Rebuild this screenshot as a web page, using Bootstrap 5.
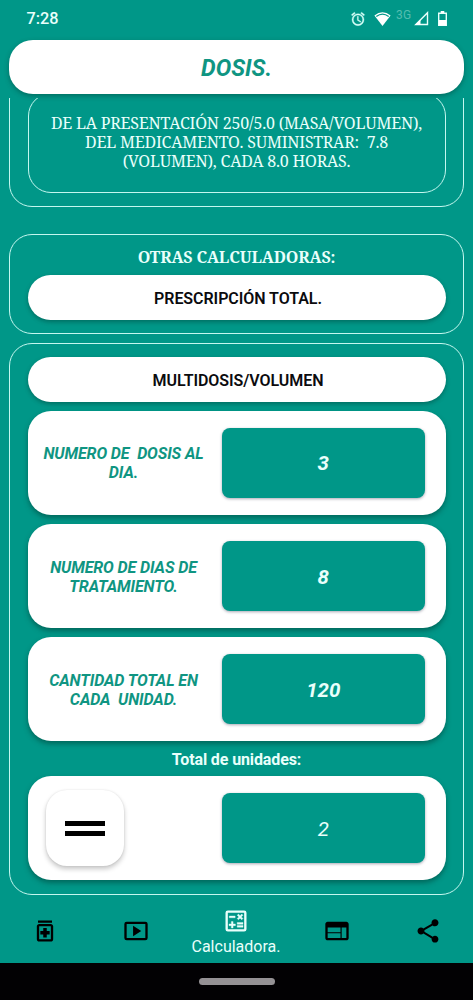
<!DOCTYPE html>
<html lang="es">
<head>
<meta charset="utf-8">
<meta name="viewport" content="width=device-width, initial-scale=1">
<title>Dosis</title>
<link rel="stylesheet" href="https://cdn.jsdelivr.net/npm/bootstrap@5.3.0/dist/css/bootstrap.min.css">
<style>
:root{--teal:#009788}
body{background:var(--teal);font-family:Roboto,"Liberation Sans",sans-serif;font-size:16px;line-height:19px;color:#e9fffb}
.screen{height:1000px;overflow:hidden}
.status{height:40px;padding:0 26.5px 3px 26.5px;font-size:16.3px;font-weight:500}
.network{font-size:12px;font-weight:400;color:#54bdb0;margin:-6px 2px 0 5px;letter-spacing:.3px}
.title-card{height:54px;margin:0 9px;padding-top:3px;border-radius:24px;background:#fff;color:#0f9582;font-size:23.2px;box-shadow:0 2px 5px rgba(0,60,50,.45)}
.scroller{margin-top:4px;padding:0 9px;height:797px}
.outline{border:1px solid #c4f7ef;border-radius:23px;padding:0 17.5px}
.serif{font-family:"Noto Serif","DejaVu Serif Condensed","DejaVu Serif",serif;letter-spacing:-.21px}
.result-out{height:131px;margin-top:-22px;padding-top:15.500px}
.result-in{height:100.500px;padding-top:20px;border-radius:23px}
.calc-heading{padding-top:13px;height:39.5px;line-height:19px;letter-spacing:-.15px}
.calc-total{margin-top:27px;height:100px}
.calc-multi{margin-top:8.500px;height:552px;padding-top:13px}
.pill{height:45.6px;padding-top:2px;padding-left:3px;border-radius:23px;background:#fff;color:#0b0b0e;font-weight:600;letter-spacing:-.05px;box-shadow:0 2px 4px rgba(0,60,50,.45)}
.panel{height:104.4px;margin-top:8.700px;border-radius:23px;background:#fff;box-shadow:0 3px 5px rgba(0,60,50,.5);padding-right:21px}
.caption{width:194.5px;color:#0f9582;padding:1px 2.500px 0 0;letter-spacing:-.1px}
.total-label{height:34.500px;padding-top:2px;letter-spacing:-.12px}
.field{width:202.5px;height:70px;padding:2px 0 0 0;border-radius:8px;background:var(--teal);font-size:20.5px;box-shadow:0 1px 3px rgba(40,40,70,.4)}
.equal{width:78px;height:76px;margin-left:18px;border-radius:21px;background:#fff;box-shadow:0 3px 5px rgba(0,0,0,.22),0 0 2px rgba(0,0,0,.1)}
.bottom{height:67.5px;padding-top:4px}
.tab{width:90.500px}
.tab-active{width:111px;padding-right:1px}
.gesture{height:37.5px;background:#020103}
.gesture span{width:76px;height:7px;background:#949194}
.ls{white-space:pre}
</style>
</head>
<body>
<main class="screen d-flex flex-column">
  <header class="status d-flex align-items-center justify-content-between flex-shrink-0">
    <span>7:28</span>
    <span class="d-flex align-items-center">
      <svg width="16" height="16" viewBox="0 0 24 24" fill="#d9fff8"><path d="M22 5.7l-4.600-3.900-1.300 1.500 4.600 3.900zM7.900 3.400L6.600 1.900 2 5.700l1.300 1.500zM12.500 8H11v6l4.700 2.900.8-1.200-4-2.400zM12 4a9 9 0 1 0 0 18 9 9 0 0 0 0-18zm0 16a7 7 0 1 1 0-14 7 7 0 0 1 0 14z" stroke="#d9fff8" stroke-width=".5"/></svg>
      <svg class="ms-2" width="17" height="16" viewBox="0 0 17 16"><path d="M.4 4.500Q8.500-2.200 16.600 4.500L8.500 15z" fill="#fff"/><path d="M2.300 5.500Q8.500.6 14.700 5.500" fill="none" stroke="#009788" stroke-width="1.200"/></svg>
      <span class="network">3G</span>
      <svg width="15" height="15" viewBox="0 0 15 15"><path d="M1.800 13.500H13.500V1.800z" fill="none" stroke="#e9fffb" stroke-width="1.400"/><path d="M1 14h5.500V8.500z" fill="#fff"/></svg>
      <svg style="margin-left:9px" width="9" height="15" viewBox="0 0 9 15"><path d="M.7 2.200h7.600v12H.7z" fill="none" stroke="#e9fffb" stroke-width="1.400"/><path d="M2.700 0h3.600v2H2.700zM1 9h7v5.500H1z" fill="#fff"/></svg>
    </span>
  </header>
  <h1 class="title-card d-flex align-items-center justify-content-center fw-bold fst-italic flex-shrink-0 mb-0">DOSIS.</h1>

  <div class="scroller overflow-hidden flex-shrink-0">
    <section class="outline result-out">
      <div class="outline result-in serif text-center ls px-0">DE LA PRESENTACIÓN 250/5.0 (MASA/VOLUMEN),
DEL MEDICAMENTO. SUMINISTRAR:  7.8
(VOLUMEN), CADA 8.0 HORAS.</div>
    </section>

    <section class="outline calc-total text-center">
      <h2 class="serif calc-heading fs-6 fw-bold mb-0">OTRAS CALCULADORAS:</h2>
      <div class="pill d-flex align-items-center justify-content-center">PRESCRIPCIÓN TOTAL.</div>
    </section>

    <section class="outline calc-multi">
      <div class="pill d-flex align-items-center justify-content-center">MULTIDOSIS/VOLUMEN</div>
      <div class="panel d-flex align-items-center">
        <div class="caption text-center fw-bold fst-italic ls">NUMERO DE  DOSIS AL
DIA.</div>
        <div class="field d-flex align-items-center justify-content-center fw-bold fst-italic">3</div>
      </div>
      <div class="panel d-flex align-items-center">
        <div class="caption text-center fw-bold fst-italic ls">NUMERO DE DIAS DE
TRATAMIENTO.</div>
        <div class="field d-flex align-items-center justify-content-center fw-bold fst-italic">8</div>
      </div>
      <div class="panel d-flex align-items-center">
        <div class="caption text-center fw-bold fst-italic ls">CANTIDAD TOTAL EN
CADA  UNIDAD.</div>
        <div class="field d-flex align-items-center justify-content-center fw-bold fst-italic">120</div>
      </div>
      <div class="total-label text-center fw-bold d-flex align-items-center justify-content-center">Total de unidades:</div>
      <div class="panel mt-0 d-flex align-items-center justify-content-between">
        <div class="equal d-flex align-items-center justify-content-center"><svg width="40" height="15" viewBox="0 0 40 15"><path d="M0 0h40v5H0zM0 10h40v5H0z"/></svg></div>
        <div class="field d-flex align-items-center justify-content-center fst-italic">2</div>
      </div>
    </section>
  </div>

  <nav class="bottom d-flex align-items-center justify-content-center flex-shrink-0">
    <div class="tab d-flex justify-content-center"><svg width="28" height="28" viewBox="0 0 24 24"><path d="M6 3h12v2H6zM17 6H7c-1.100 0-2 .9-2 2v11c0 1.100.9 2 2 2h10c1.100 0 2-.9 2-2V8c0-1.100-.9-2-2-2zm0 13H7V8h10zM16 12h-2.500V9.500h-3V12H8v3h2.500v2.500h3V15H16z"/></svg></div>
    <div class="tab d-flex justify-content-center"><svg width="28" height="28" viewBox="0 0 24 24"><path d="M9.500 7.500v9l7-4.500zM20 4H4a2 2 0 0 0-2 2v12a2 2 0 0 0 2 2h16a2 2 0 0 0 2-2V6a2 2 0 0 0-2-2zm0 14H4V6h16z" fill-rule="evenodd"/></svg></div>
    <div class="tab-active d-flex flex-column align-items-center">
      <svg width="28" height="28" viewBox="0 0 24 24" fill="#e9fffb"><path fill-rule="evenodd" d="M19 3H5a2 2 0 0 0-2 2v14a2 2 0 0 0 2 2h14a2 2 0 0 0 2-2V5a2 2 0 0 0-2-2zm0 16H5V5h14z"/><path d="M6.250 7.720h5v1.500h-5zM13 15.750h5v1.500h-5zM13 13.250h5v1.500h-5zM8 18h1.500v-2h2v-1.500h-2v-2H8v2H6V16h2zM14.090 10.950l1.410-1.410 1.410 1.410 1.060-1.060-1.410-1.420 1.410-1.410L16.910 6 15.500 7.410 14.090 6l-1.060 1.060 1.410 1.410-1.410 1.420z" stroke="#e9fffb" stroke-width=".3"/></svg>
      <span class="pt-1 lh-1">Calculadora.</span>
    </div>
    <div class="tab d-flex justify-content-center"><svg width="28" height="28" viewBox="0 0 24 24"><path d="M20 4H4c-1.100 0-2 .9-2 2v12c0 1.100.9 2 2 2h16c1.100 0 2-.9 2-2V6c0-1.100-.9-2-2-2zm-5 14H4v-4h11zm0-5H4V9h11zm5 5h-4V9h4z"/></svg></div>
    <div class="tab d-flex justify-content-center"><svg width="28" height="28" viewBox="0 0 24 24"><path d="M18 16.080c-.76 0-1.440.3-1.960.77L8.910 12.700c.05-.23.090-.46.090-.7s-.04-.47-.09-.7l7.050-4.110c.54.5 1.250.81 2.040.81 1.660 0 3-1.340 3-3s-1.340-3-3-3-3 1.340-3 3c0 .24.04.47.09.7L8.040 9.810C7.500 9.310 6.790 9 6 9c-1.660 0-3 1.340-3 3s1.340 3 3 3c.79 0 1.500-.31 2.040-.81l7.120 4.160c-.05.21-.08.43-.08.65 0 1.610 1.310 2.920 2.920 2.920s2.920-1.310 2.920-2.920-1.310-2.920-2.920-2.920z"/></svg></div>
  </nav>
  <footer class="gesture d-flex align-items-center justify-content-center flex-shrink-0"><span class="rounded-pill"></span></footer>
</main>
<script src="https://cdn.jsdelivr.net/npm/bootstrap@5.3.0/dist/js/bootstrap.bundle.min.js"></script>
</body>
</html>
